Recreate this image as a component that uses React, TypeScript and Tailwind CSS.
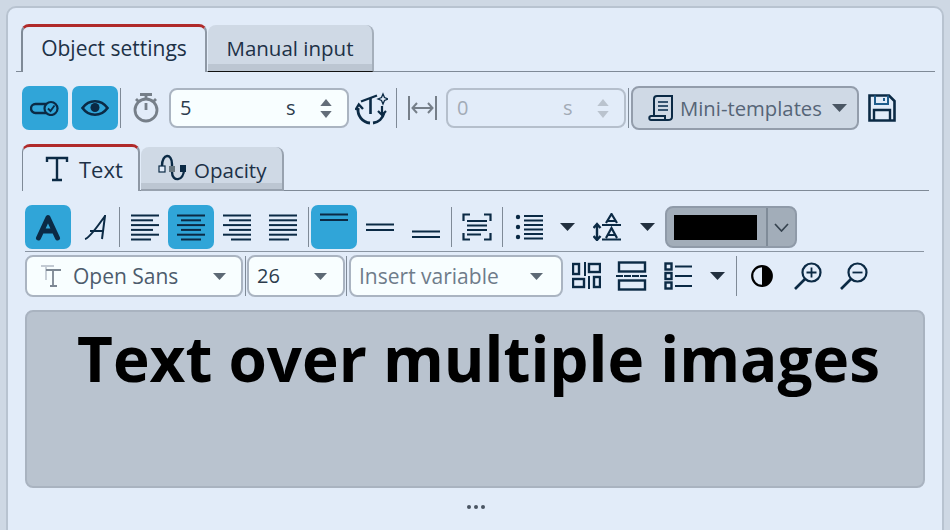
import React from "react";

const navy = "#0b2a45";
type P = { children?: React.ReactNode };

function Ico({ w, h, vb, className, children }: { w: number; h: number; vb?: string; className?: string; children: React.ReactNode }) {
  return (
    <svg width={w} height={h} viewBox={vb ?? `0 0 ${w} ${h}`} fill="none" stroke={navy} strokeWidth={2} className={className}>
      {children}
    </svg>
  );
}

function Sep({ h, className }: { h: string; className?: string }) {
  return <div className={`w-px bg-[#7f8a97] shrink-0 ${h} ${className ?? ""}`} />;
}

function Caret({ className, color = "#2b3a4a", w = 15, h = 8 }: { className?: string; color?: string; w?: number; h?: number }) {
  return (
    <svg width={w} height={h} viewBox="0 0 15 8" className={`shrink-0 ${className ?? ""}`}>
      <path d="M0 0H15L7.5 8Z" fill={color} />
    </svg>
  );
}

function Spin({ color, className }: { color: string; className?: string }) {
  return (
    <div className={`flex flex-col gap-[5px] ${className ?? ""}`}>
      <svg width={12} height={7} viewBox="0 0 13 8"><path d="M6.5 0L13 8H0Z" fill={color} /></svg>
      <svg width={12} height={7} viewBox="0 0 13 8"><path d="M0 0H13L6.5 8Z" fill={color} /></svg>
    </div>
  );
}

function Lines({ rows }: { rows: [number, number][] }) {
  return (
    <Ico w={30} h={28}>
      {rows.map(([a, b], i) => (
        <path key={i} d={`M${a} ${2.5 + i * 4.8}H${b}`} strokeWidth={2} />
      ))}
    </Ico>
  );
}

function Select({ w, children, text }: P & { w: string; text: string }) {
  return (
    <div className={`${w} h-[42px] shrink-0 rounded-[8px] border-2 border-[#aab4c1] bg-[#f8feff] flex items-center ${text} text-[21px]`}>
      {children}
    </div>
  );
}

export default function App() {
  return (
    <div className="w-[950px] h-[530px] overflow-hidden bg-[#ced8e4] pt-[6px] pl-[6px] font-['Open_Sans',sans-serif]">
      <div className="w-[938px] h-[540px] rounded-t-[10px] border-2 border-[#b8c3d0] bg-[#e2ecf9] pl-[8px] pr-[7px] pt-[16px]">
        {/* main tabs */}
        <div className="flex h-[48px] items-end border-b border-[#7f8a97] pl-[5px]">
          <div className="relative top-px w-[186px] h-[48px] rounded-t-[8px] border-x-2 border-l-[#7f8a97] border-r-[#8e98a5] border-t-[3px] border-t-[#b02a2a] bg-[#e2ecf9] flex items-center justify-center text-[21px] text-[#1d3147]">
            <span className="relative top-[-1px]">Object settings</span>
          </div>
          <div className="relative top-px ml-px w-[166px] h-[47px] rounded-t-[8px] border-r-2 border-[#a5afbb] border-b-[1px] border-b-[#111] bg-[#cfd9e5] shadow-[inset_0_-7px_0_#bcc6d2] flex items-center justify-center text-[20.5px] text-[#1d3147]">
            Manual input
          </div>
        </div>

        {/* first toolbar */}
        <div className="flex items-center h-[44px] mt-[14px] pl-[6px]">
          <div className="w-[46px] h-[44px] rounded-[7px] bg-[#30a5d8] flex items-center justify-center">
            <Ico w={30} h={16}>
              <rect x="1" y="4" width="26" height="9" rx="4.5" strokeWidth={2.4} />
              <circle cx="21" cy="8.5" r="6.5" fill="#30a5d8" strokeWidth={2.2} />
              <path d="M18 8.5L20.5 11L24.5 5.5" strokeWidth={1.8} />
            </Ico>
          </div>
          <div className="ml-[4px] w-[46px] h-[44px] rounded-[7px] bg-[#30a5d8] flex items-center justify-center">
            <Ico w={28} h={20}>
              <path d="M1.5 10C8 1 20 1 26.5 10C20 19 8 19 1.5 10Z" strokeWidth={2.6} />
              <circle cx="14" cy="9.5" r="4.5" fill={navy} stroke="none" />
            </Ico>
          </div>
          <Sep h="h-[40px]" className="ml-[2px]" />
          <div className="ml-[12px]">
            <Ico w={26} h={30}>
              <g stroke="#767f89" strokeWidth={2.8}>
                <circle cx="13" cy="17" r="11" />
                <path d="M7 1.5H19M13 2V6M13 10V17M3 6L6 9M23 6L20 9" />
              </g>
            </Ico>
          </div>
          <div className="ml-[10px] w-[180px] h-[40px] shrink-0 rounded-[8px] border-2 border-[#aab4c1] bg-[#f8feff] flex items-center text-[20px] text-[#2c3c4d] pl-[9px]">
            <span className="w-[106px]">5</span>
            <span>s</span>
            <Spin color="#636d79" className="ml-[24px]" />
          </div>
          <div className="ml-[6px]">
            <Ico w={33} h={33}>
              <path d="M3.2 16A13 13 0 0 0 15 31" strokeWidth={2.8} />
              <path d="M18 31A13 13 0 0 0 29 21" strokeWidth={2.8} />
              <path d="M0.5 18L3.8 12.5L8 17" strokeWidth={2.4} />
              <path d="M6 9.5L22 3.5" strokeWidth={2.4} />
              <path d="M15.5 6V22" strokeWidth={2.6} />
              <path d="M28 2L29.5 5.5L33 7L29.5 8.5L28 12L26.5 8.5L23 7L26.5 5.5Z" strokeWidth={1.3} />
              <path d="M27 14V22M23 19L27 23L31 19" strokeWidth={2.2} />
            </Ico>
          </div>
          <Sep h="h-[40px]" className="ml-[8px]" />
          <div className="ml-[11px]">
            <Ico w={29} h={26}>
              <g stroke="#767f89" strokeWidth={2}>
                <path d="M1 1V25M28 1V25M5 13H24M9 8L4.5 13L9 18M20 8L24.5 13L20 18" />
              </g>
            </Ico>
          </div>
          <div className="ml-[9px] w-[180px] h-[40px] shrink-0 rounded-[8px] border-2 border-[#b5bfcc] flex items-center text-[20px] text-[#a2abb6] pl-[9px]">
            <span className="w-[106px]">0</span>
            <span>s</span>
            <Spin color="#bac3ce" className="ml-[24px]" />
          </div>
          <Sep h="h-[40px]" className="ml-[2px]" />
          <div className="ml-[2px] w-[228px] h-[44px] shrink-0 rounded-[8px] border-2 border-[#939dab] bg-[#cfd9e5] flex items-center pl-[15px] text-[20.3px] text-[#566577]">
            <Ico w={25} h={26} className="shrink-0">
              <path d="M6 20V4C6 2 7 1 9 1H24V22C24 24 22 25 20 25H3C1 25 0.5 21.5 3 21H17V25" strokeWidth={2} />
              <path d="M10 7H20M10 11H20M10 15H20" strokeWidth={2} stroke="#35536f" />
            </Ico>
            <span className="ml-[7px]">Mini-templates</span>
            <Caret className="ml-[10px]" color="#4a5663" />
          </div>
          <div className="ml-[9px]">
            <Ico w={28} h={28}>
              <path d="M1.5 1.5H21L26.5 7V26.5H1.5Z" strokeWidth={2.6} />
              <path d="M7 1.5V10H20V1.5" strokeWidth={2} stroke="#1f5d8c" />
              <path d="M16 4V7" strokeWidth={2} stroke="#1f5d8c" />
              <path d="M6 26V16H22V26" strokeWidth={2.4} />
            </Ico>
          </div>
        </div>

        {/* inner tabs */}
        <div className="flex h-[47px] items-end border-b border-[#7f8a97] mt-[14px] ml-[6px] mr-[6px]">
          <div className="relative top-px w-[118px] h-[47px] rounded-t-[8px] border-l border-r-2 border-l-[#7f8a97] border-r-[#8e98a5] border-t-[3px] border-t-[#b02a2a] bg-[#e2ecf9] flex items-center text-[22px] text-[#1d3147] pl-[22px]">
            <Ico w={24} h={26} className="shrink-0 mr-[10px]">
              <path d="M2 6V2H22V6M12 2V24M7 24H17" strokeWidth={2.4} />
            </Ico>
            Text
          </div>
          <div className="relative top-px ml-px w-[143px] h-[44px] rounded-t-[8px] border-r-2 border-b-2 border-[#98a2af] bg-[#cfd9e5] shadow-[inset_0_-6px_0_#bcc6d2] flex items-center text-[20.5px] text-[#1d3147] pl-[17px]">
            <Ico w={28} h={28} className="shrink-0 mr-[8px]">
              <path d="M4 12C4 -1 14 -1 14 10V18C14 28 26 28 26 15" strokeWidth={2.4} />
              <rect x="1" y="12" width="6" height="6" fill="#e2ecf9" strokeWidth={1.2} />
              <rect x="11" y="12" width="6" height="6" fill="#67767f" stroke="none" />
              <rect x="22" y="11" width="7" height="7" fill={navy} stroke="none" />
            </Ico>
            <span className="relative top-[2px]">Opacity</span>
          </div>
        </div>

        {/* second toolbar */}
        <div className="flex items-center h-[44px] mt-[14px] ml-[9px]">
          <div className="w-[46px] h-[44px] shrink-0 rounded-[7px] bg-[#30a5d8] flex items-center justify-center">
            <Ico w={26} h={27}>
              <path d="M3.5 24L13 3.5L22.5 24M7 17H19" strokeWidth={5} strokeLinecap="round" strokeLinejoin="round" />
            </Ico>
          </div>
          <div className="w-[48px] flex justify-center shrink-0">
            <Ico w={22} h={25}>
              <path d="M1 24C6 23 15 9 21 1L18 24M6 16H19" strokeWidth={2} />
            </Ico>
          </div>
          <Sep h="h-[40px]" />
          <div className="ml-[10px] w-[30px] shrink-0"><Lines rows={[[1, 29], [1, 23], [1, 29], [1, 23], [1, 29], [1, 21]]} /></div>
          <div className="ml-[8px] w-[46px] h-[44px] shrink-0 rounded-[7px] bg-[#30a5d8] flex items-center justify-center"><Lines rows={[[1, 29], [5, 25], [1, 29], [5, 25], [1, 29], [5, 25]]} /></div>
          <div className="ml-[8px] w-[30px] shrink-0"><Lines rows={[[1, 29], [7, 29], [1, 29], [7, 29], [1, 29], [9, 29]]} /></div>
          <div className="ml-[16px] w-[30px] shrink-0"><Lines rows={[[1, 29], [1, 29], [1, 29], [1, 29], [1, 29], [1, 21]]} /></div>
          <Sep h="h-[40px]" className="ml-[10px]" />
          <div className="ml-[2px] w-[46px] h-[44px] shrink-0 rounded-[7px] bg-[#30a5d8] flex justify-center pt-[8px]">
            <Ico w={28} h={12}><path d="M0 1.5H28M0 7H28" strokeWidth={2.2} /></Ico>
          </div>
          <div className="ml-[9px] w-[28px] shrink-0 pt-[1px]"><Ico w={28} h={10}><path d="M0 1.5H28M0 7H28" strokeWidth={2.2} /></Ico></div>
          <div className="ml-[18px] w-[28px] shrink-0 pt-[16px]"><Ico w={28} h={10}><path d="M0 1.5H28M0 7H28" strokeWidth={2.2} /></Ico></div>
          <Sep h="h-[40px]" className="ml-[11px]" />
          <div className="ml-[10px] shrink-0">
            <Ico w={30} h={28}>
              <path d="M8 1.5H1.5V8M22 1.5H28.5V8M8 26.5H1.5V20M22 26.5H28.5V20" strokeWidth={2.2} />
              <path d="M5 8H25M5 12.5H25M5 17H25M5 21.5H19" strokeWidth={2.2} />
            </Ico>
          </div>
          <Sep h="h-[40px]" className="ml-[10px]" />
          <div className="ml-[12px] shrink-0">
            <Ico w={28} h={26}>
              <path d="M9 2H28M9 6.5H28M9 11H28M9 15.5H28M9 20H28M9 24.5H28" strokeWidth={2} />
              <circle cx="3" cy="3" r="2.2" fill={navy} stroke="none" />
              <circle cx="3" cy="13" r="2.2" fill={navy} stroke="none" />
              <circle cx="3" cy="23" r="2.2" fill={navy} stroke="none" />
            </Ico>
          </div>
          <Caret className="ml-[17px]" color="#22303f" />
          <div className="ml-[18px] shrink-0">
            <Ico w={29} h={28}>
              <path d="M13 10L18.5 1L24 10M9 12H28M15 8H22" strokeWidth={2.2} />
              <path d="M13 25L18.5 15L24 25M9 26.5H28M15 22H22" strokeWidth={2.2} />
              <path d="M4 12V26M0.5 15L4 11L7.5 15M0.5 23L4 27L7.5 23" strokeWidth={2.4} />
            </Ico>
          </div>
          <Caret className="ml-[18px]" color="#22303f" />
          <div className="ml-[10px] w-[132px] h-[42px] shrink-0 rounded-[8px] border-2 border-[#8f9aa8] bg-[#a2adb9] flex items-center">
            <div className="ml-[7px] w-[83px] h-[25px] bg-black" />
            <div className="ml-[9px] w-[2px] h-full bg-[#7f8b98]" />
            <div className="flex-1 flex justify-center">
              <svg width={15} height={9} viewBox="0 0 15 9" fill="none" stroke="#36434f" strokeWidth={1.7}><path d="M1 1L7.5 8L14 1" /></svg>
            </div>
          </div>
        </div>

        <div className="h-px bg-[#8a95a2] mt-[2px] ml-[9px] mr-[11px]" />

        {/* third toolbar */}
        <div className="flex items-center h-[42px] mt-[3px] ml-[9px]">
          <Select w="w-[218px]" text="text-[#4d5c6d]">
            <svg width={22} height={24} viewBox="0 0 22 24" fill="none" className="ml-[13px] shrink-0">
              <path d="M1 2H14M6 2V16" stroke="#c2cad3" strokeWidth={1.8} />
              <path d="M6 6H21M13 6V22M10 22H17" stroke="#7c8793" strokeWidth={1.8} />
            </svg>
            <span className="ml-[11px] w-[140px] relative top-px">Open Sans</span>
            <Caret w={13} h={7} color="#5d6975" />
          </Select>
          <Sep h="h-[40px]" className="ml-[2px] w-[2px]" />
          <Select w="w-[98px] ml-[1px]" text="text-[#2c3c4d]">
            <span className="ml-[8px] w-[57px] text-[20px]">26</span>
            <Caret w={13} h={7} color="#5d6975" />
          </Select>
          <Sep h="h-[40px]" className="ml-[1px]" />
          <Select w="w-[214px] ml-[2px]" text="text-[#6f7c8a]">
            <span className="ml-[8px] w-[171px] whitespace-nowrap relative top-px">Insert variable</span>
            <Caret w={13} h={7} color="#5d6975" />
          </Select>
          <div className="ml-[9px] shrink-0">
            <Ico w={29} h={28}>
              <rect x="1" y="2" width="6" height="10" strokeWidth={2.4} />
              <rect x="17" y="2" width="11" height="8" strokeWidth={2.4} />
              <path d="M13 0V14" strokeWidth={2} />
              <rect x="1" y="17" width="11" height="8" strokeWidth={2.4} />
              <path d="M17 14V27" strokeWidth={2} />
              <rect x="22" y="15" width="6" height="10" strokeWidth={2.4} />
            </Ico>
          </div>
          <div className="ml-[15px] shrink-0">
            <Ico w={32} h={30}>
              <rect x="3" y="1.5" width="26" height="9" strokeWidth={2.4} />
              <rect x="3" y="19.5" width="26" height="9" strokeWidth={2.4} />
              <path d="M0 15H32" strokeWidth={2} strokeDasharray="7 1" />
            </Ico>
          </div>
          <div className="ml-[16px] shrink-0">
            <Ico w={29} h={28}>
              <rect x="1.5" y="1.5" width="6" height="6" strokeWidth={2.4} />
              <rect x="1.5" y="11" width="6" height="6" strokeWidth={2.4} />
              <rect x="1.5" y="20.5" width="6" height="6" strokeWidth={2.4} />
              <path d="M11 4.5H28M11 14H28M11 24H28" strokeWidth={2.2} />
            </Ico>
          </div>
          <Caret className="ml-[17px]" color="#22303f" />
          <Sep h="h-[40px]" className="ml-[11px] w-[2px]" />
          <div className="ml-[14px] shrink-0">
            <svg width={22} height={24} viewBox="0 0 22 24">
              <circle cx="11" cy="12" r="9.8" fill="none" stroke="#000" strokeWidth={2.2} />
              <path d="M11 2A10 10 0 0 1 11 22Z" fill="#000" />
            </svg>
          </div>
          <div className="ml-[21px] shrink-0">
            <Ico w={28} h={28}>
              <circle cx="17.5" cy="10.5" r="9" strokeWidth={2.2} />
              <path d="M11 17L1 27" strokeWidth={2.6} />
              <path d="M12.5 10.5H22.5M17.5 5.5V15.5" strokeWidth={1.8} />
            </Ico>
          </div>
          <div className="ml-[18px] shrink-0">
            <Ico w={28} h={28}>
              <circle cx="17.5" cy="10.5" r="9" strokeWidth={2.2} />
              <path d="M11 17L1 27" strokeWidth={2.6} />
              <path d="M12.5 10.5H22.5" strokeWidth={1.8} />
            </Ico>
          </div>
        </div>

        {/* text area */}
        <div className="mt-[13px] ml-[9px] w-[900px] h-[178px] rounded-[8px] border-2 border-[#a9b3c0] bg-[#b9c3cf] flex justify-center pl-[7px] text-[62px] leading-[92px] font-bold text-black whitespace-nowrap">
          Text over multiple images
        </div>
        <div className="mt-[17px] flex justify-center ml-[10px] gap-[3px] w-[900px]">
          <div className="w-[4px] h-[4px] rounded-full bg-[#4a5563]" />
          <div className="w-[4px] h-[4px] rounded-full bg-[#4a5563]" />
          <div className="w-[4px] h-[4px] rounded-full bg-[#4a5563]" />
        </div>
      </div>
    </div>
  );
}
